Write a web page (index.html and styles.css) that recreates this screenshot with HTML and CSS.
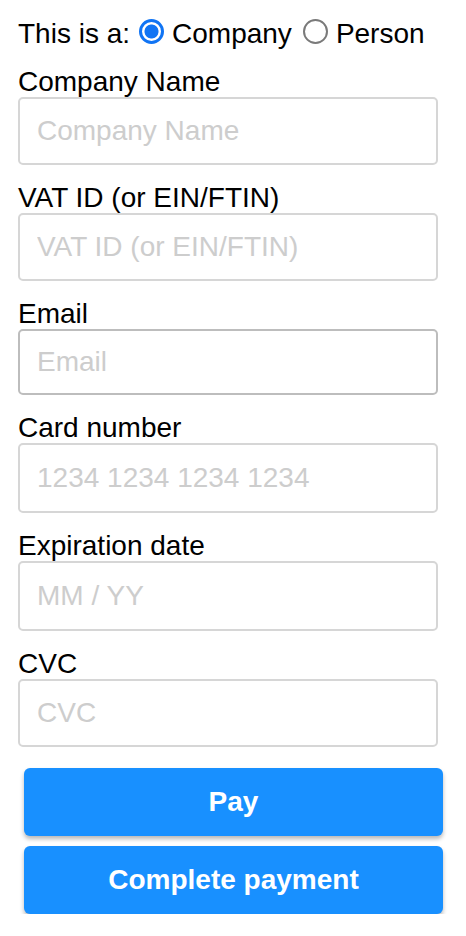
FILE: index.html
```html
<!DOCTYPE html>
<html lang="en">
<head>
<meta charset="utf-8">
<title>Payment</title>
<link rel="stylesheet" href="styles.css">
</head>
<body>
<form class="form">
  <div class="type-row">
    <span class="type-label">This is a:</span>
    <label class="radio"><span class="radio-dot is-checked"></span><span class="radio-text">Company</span></label>
    <label class="radio"><span class="radio-dot"></span><span class="radio-text">Person</span></label>
  </div>
  <div class="field">
    <label class="field-label">Company Name</label>
    <input class="field-input h68" type="text" placeholder="Company Name">
  </div>
  <div class="field">
    <label class="field-label">VAT ID (or EIN/FTIN)</label>
    <input class="field-input h68" type="text" placeholder="VAT ID (or EIN/FTIN)">
  </div>
  <div class="field">
    <label class="field-label">Email</label>
    <input class="field-input h66 is-dark" type="text" placeholder="Email">
  </div>
  <div class="field">
    <label class="field-label">Card number</label>
    <input class="field-input h70" type="text" placeholder="1234 1234 1234 1234">
  </div>
  <div class="field">
    <label class="field-label">Expiration date</label>
    <input class="field-input h70" type="text" placeholder="MM / YY">
  </div>
  <div class="field field-last">
    <label class="field-label">CVC</label>
    <input class="field-input h68" type="text" placeholder="CVC">
  </div>
  <div class="actions">
    <button class="btn" type="button">Pay</button>
    <button class="btn" type="button">Complete payment</button>
  </div>
</form>
</body>
</html>
```
FILE: styles.css
```css
* { box-sizing: border-box; }
html, body { margin: 0; padding: 0; background: #fff; }
body {
  font-family: "Liberation Sans", Arial, Helvetica, sans-serif;
  font-size: 28px;
  color: #000;
}
.form {
  padding: 17px 28px 0 18px;
}
.type-row {
  display: flex;
  align-items: center;
  line-height: 36px;
  height: 34px;
  margin-bottom: 12px;
}
.radio {
  display: flex;
  align-items: center;
}
.radio-dot {
  width: 25px;
  height: 25px;
  border-radius: 50%;
  border: 2px solid #7a7a7a;
  background: #fff;
  margin-bottom: 6px;
  margin-left: 9px;
  margin-right: 8px;
}
.radio + .radio .radio-dot { margin-left: 11px; }
.radio-dot.is-checked {
  border: 3px solid #1074f4;
  background: radial-gradient(circle, #1074f4 0 6.6px, #fff 7.4px);
}
.field {
  display: flex;
  flex-direction: column;
  margin-bottom: 14px;
}
.field-last { margin-bottom: 21px; }
.field-label {
  display: block;
  line-height: 37px;
  height: 34px;
}
.field-input {
  display: block;
  width: 100%;
  margin: 0;
  border: 2px solid #d6d6d6;
  border-radius: 5px;
  padding: 0 15px 0 17px;
  font-family: inherit;
  font-size: 28px;
  color: #000;
  background: #fff;
  outline: none;
}
.field-input::placeholder { color: #cdcdcd; opacity: 1; }
.field-input.is-dark { border-color: #bdbdbd; }
.h66 { height: 66px; }
.h68 { height: 68px; }
.h70 { height: 70px; }
.actions {
  display: flex;
  flex-direction: column;
  gap: 10px;
  margin: 0 -5px 0 6px;
}
.btn {
  display: block;
  width: 100%;
  height: 68px;
  border: 0;
  border-radius: 6px;
  background: #1890ff;
  color: #fff;
  font-family: inherit;
  font-weight: bold;
  font-size: 28px;
  box-shadow: 0 3px 4px rgba(0, 0, 0, 0.28);
  padding: 0;
}
```
